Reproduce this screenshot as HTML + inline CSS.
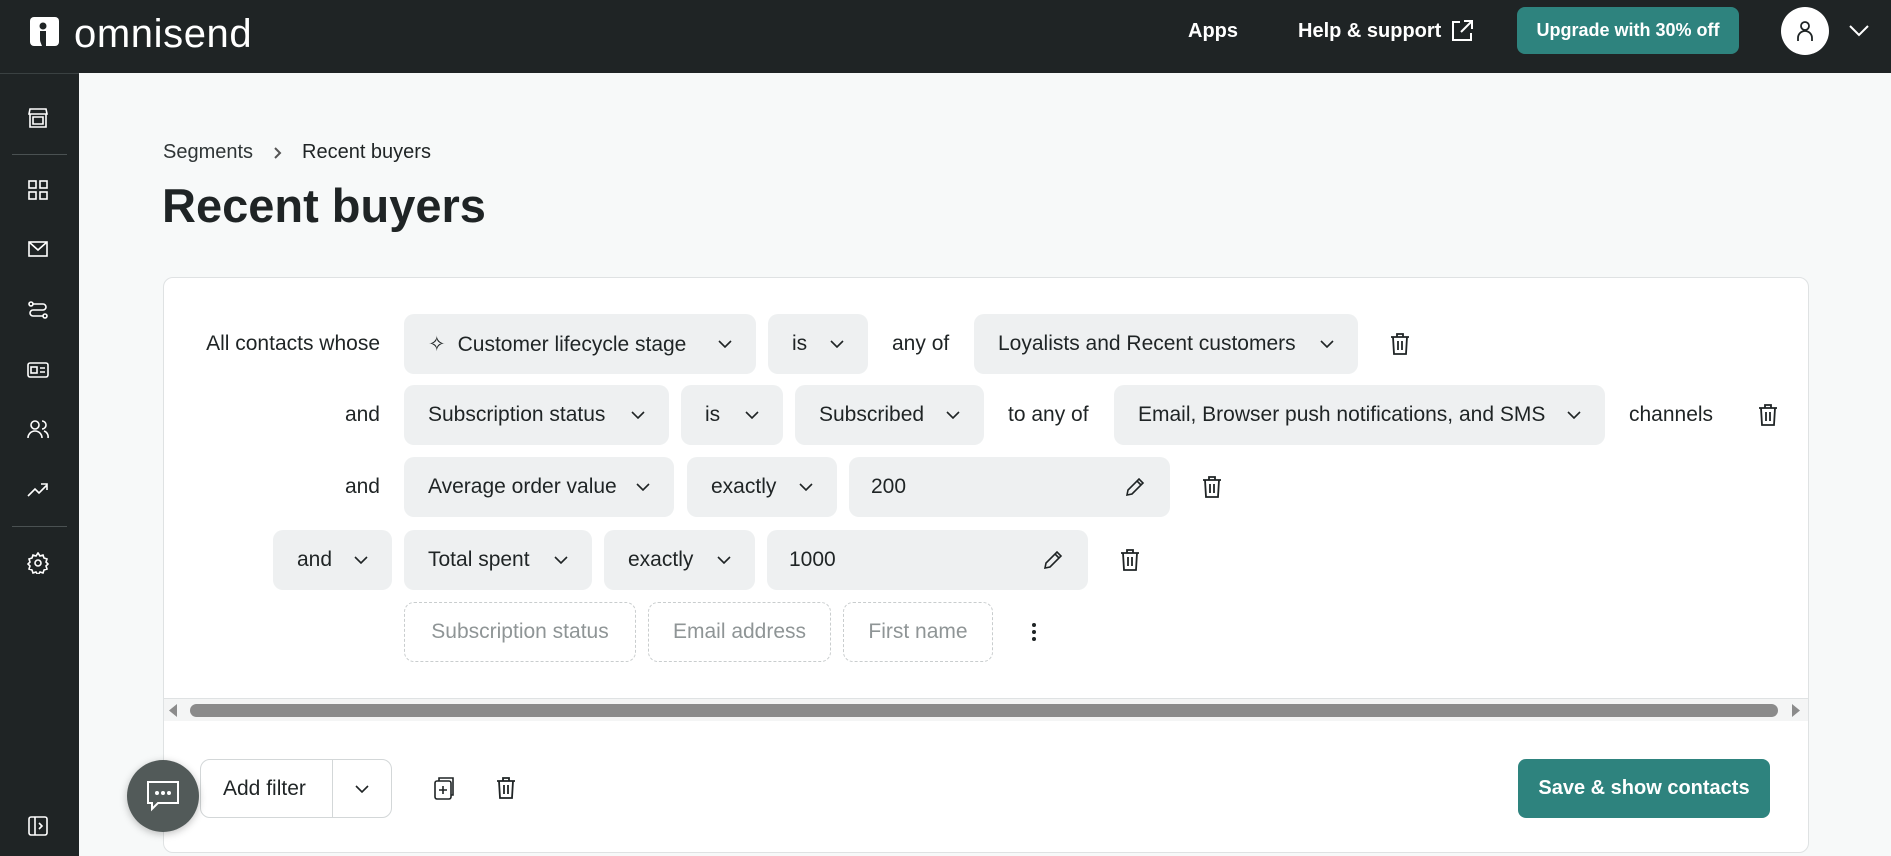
<!DOCTYPE html>
<html><head><meta charset="utf-8"><style>
*{box-sizing:border-box;margin:0;padding:0}
body{width:1891px;height:856px;overflow:hidden;background:#f7f9f9;font-family:"Liberation Sans",sans-serif;color:#1f2425;position:relative}
.top{position:absolute;left:0;top:0;width:1891px;height:73px;background:#1f2425}
.side{position:absolute;left:0;top:73px;width:79px;height:783px;background:#1f2425;border-top:1px solid #3a4142}
.a{position:absolute}
.p{position:absolute;height:60px;background:#eef0f1;border-radius:10px;display:flex;align-items:center;padding:0 24px;font-size:21px;font-weight:500;white-space:nowrap;justify-content:space-between}
.p svg{margin-left:14px;flex:none}
.t{position:absolute;font-size:21px;line-height:60px;white-space:nowrap}
.d{position:absolute;height:60px;border:1px dashed #c9cdce;border-radius:10px;font-size:21px;color:#8f9596;display:flex;align-items:center;justify-content:center;white-space:nowrap}
.si{position:absolute;left:27px;width:22px;height:22px}
</style></head><body>
<div class="top">
  <svg class="a" style="left:30px;top:17px" width="29" height="29" viewBox="0 0 29 29"><rect width="29" height="29" rx="4" fill="#fff"/><circle cx="13" cy="9" r="3.5" fill="#1f2425"/><path d="M10 14h6v15h-4c-1-3-2-4-2-7z" fill="#1f2425"/></svg>
  <div class="a" style="left:74px;top:12px;font-size:40px;color:#fff;letter-spacing:0.6px">omnisend</div>
  <div class="a" style="left:1188px;top:20px;font-size:20px;color:#fff;font-weight:bold">Apps</div>
  <div class="a" style="left:1298px;top:20px;font-size:20px;color:#fff;font-weight:bold">Help &amp; support</div>
  <svg class="a" style="left:1450px;top:19px" width="24" height="24" viewBox="0 0 24 24" fill="none" stroke="#fff" stroke-width="2"><path d="M10 3H3v18h18v-7M14 2h8v8M22 2L11 13"/></svg>
  <div class="a" style="left:1517px;top:7px;width:222px;height:47px;background:#2e837e;border-radius:8px;color:#fff;font-weight:bold;font-size:18px;display:flex;align-items:center;justify-content:center">Upgrade with 30% off</div>
  <div class="a" style="left:1781px;top:7px;width:48px;height:48px;border-radius:50%;background:#fff"></div>
  <svg class="a" style="left:1795px;top:19px" width="20" height="24" viewBox="0 0 20 24" fill="none" stroke="#1f2425" stroke-width="1.8"><circle cx="10" cy="7" r="4"/><path d="M3 22v-3a7 7 0 0 1 14 0v3"/></svg>
  <svg class="a" style="left:1849px;top:25px" width="20" height="12" viewBox="0 0 20 12" fill="none" stroke="#fff" stroke-width="2"><path d="M1 1l9 9 9-9"/></svg>
</div>
<div class="side">
  <svg class="si" style="top:33px" viewBox="0 0 22 22" fill="none" stroke="#fff" stroke-width="1.6"><path d="M3 2h16l1 5H2zM3 7v13h16V7M6 10h10v7H6z"/></svg>
  <div class="a" style="left:12px;top:80px;width:55px;height:1px;background:#4a5152"></div>
  <svg class="si" style="top:105px" viewBox="0 0 22 22" fill="none" stroke="#fff" stroke-width="1.6"><rect x="2" y="2" width="7" height="7"/><rect x="13" y="2" width="7" height="7"/><rect x="2" y="13" width="7" height="7"/><rect x="13" y="13" width="7" height="7"/></svg>
  <svg class="si" style="top:164px" viewBox="0 0 22 22" fill="none" stroke="#fff" stroke-width="1.6"><rect x="2" y="4" width="18" height="14"/><path d="M2 4l9 8 9-8"/></svg>
  <svg class="si" style="top:225px" viewBox="0 0 22 22" fill="none" stroke="#fff" stroke-width="1.6"><circle cx="4" cy="5" r="2"/><circle cx="18" cy="17" r="2"/><path d="M6 5h10a3 3 0 0 1 0 6H6a3 3 0 0 0 0 6h10"/></svg>
  <svg class="si" style="top:285px" viewBox="0 0 22 22" fill="none" stroke="#fff" stroke-width="1.6"><rect x="1" y="4" width="20" height="14" rx="2"/><rect x="4" y="8" width="6" height="6"/><path d="M13 9h5M13 13h5"/></svg>
  <svg class="si" style="top:344px" viewBox="0 0 22 22" fill="none" stroke="#fff" stroke-width="1.6"><circle cx="8" cy="7" r="4"/><path d="M1 20a7 7 0 0 1 14 0M15 3a4 4 0 0 1 0 8M17 13a6 6 0 0 1 4 7"/></svg>
  <svg class="si" style="top:404px" viewBox="0 0 22 22" fill="none" stroke="#fff" stroke-width="1.6"><path d="M1 18l7-7 4 4 8-8M14 6h6v6"/></svg>
  <div class="a" style="left:12px;top:452px;width:55px;height:1px;background:#4a5152"></div>
  <svg class="si" style="top:478px" viewBox="0 0 22 22" fill="none" stroke="#fff" stroke-width="1.6"><circle cx="11" cy="11" r="3"/><path d="M11 1l2 3 3-1 1 3 3 1-1 3 2 2-2 2 1 3-3 1-1 3-3-1-2 3-2-3-3 1-1-3-3-1 1-3-2-2 2-2-1-3 3-1 1-3 3 1z"/></svg>
  <svg class="si" style="top:741px" viewBox="0 0 22 22" fill="none" stroke="#fff" stroke-width="1.6"><rect x="2" y="2" width="18" height="18" rx="2"/><path d="M8 2v18M12 8l3 3-3 3"/></svg>
</div>

<div class="a" style="left:163px;top:141px;font-size:20px;color:#2f3536">Segments</div>
<svg class="a" style="left:274px;top:147px" width="8" height="12" viewBox="0 0 8 12" fill="none" stroke="#555" stroke-width="2"><path d="M1 1l5 5-5 5"/></svg>
<div class="a" style="left:302px;top:141px;font-size:20px;font-weight:500">Recent buyers</div>
<div class="a" style="left:162px;top:178px;font-size:47px;font-weight:bold">Recent buyers</div>

<div class="a" style="left:163px;top:277px;width:1646px;height:576px;background:#fff;border:1px solid #dfe2e3;border-radius:10px"></div>
<div class="a" style="left:164px;top:698px;width:1644px;height:1px;background:#dfe2e3"></div>
<div class="a" style="left:164px;top:699px;width:1644px;height:22px;background:#f4f5f5"></div>
<div class="a" style="left:190px;top:704px;width:1588px;height:13px;background:#8b8b8b;border-radius:7px"></div>
<svg class="a" style="left:168px;top:704px" width="10" height="13"><path d="M9 0v13L1 6.5z" fill="#8b8b8b"/></svg>
<svg class="a" style="left:1791px;top:704px" width="10" height="13"><path d="M1 0v13l8-6.5z" fill="#8b8b8b"/></svg>

<svg width="0" height="0" style="position:absolute"><defs>
<symbol id="ch" viewBox="0 0 14 8"><path d="M1 1l6 6 6-6" fill="none" stroke="#1f2425" stroke-width="1.6"/></symbol>
<symbol id="tr" viewBox="0 0 22 24"><path d="M2 5h18M8 5V2h6v3M4 5l1 17h12l1-17M9 9v9M13 9v9" fill="none" stroke="#1f2425" stroke-width="1.8"/></symbol>
<symbol id="pe" viewBox="0 0 22 22"><path d="M3 19l1-5L15 3l4 4L8 18zM13 5l4 4" fill="none" stroke="#1f2425" stroke-width="1.6"/></symbol>
</defs></svg>

<div class="t" style="right:1511px;top:314px">All contacts whose</div>
<div class="p" style="left:404px;top:314px;width:352px"><span><span style="margin-right:12px">✧</span>Customer lifecycle stage</span><svg width="14" height="8"><use href="#ch"/></svg></div>
<div class="p" style="left:768px;top:314px;width:100px"><span>is</span><svg width="14" height="8"><use href="#ch"/></svg></div>
<div class="t" style="left:892px;top:314px">any of</div>
<div class="p" style="left:974px;top:314px;width:384px"><span>Loyalists and Recent customers</span><svg width="14" height="8"><use href="#ch"/></svg></div>
<svg class="a" style="left:1389px;top:332px" width="22" height="24"><use href="#tr"/></svg>

<div class="t" style="right:1511px;top:385px">and</div>
<div class="p" style="left:404px;top:385px;width:265px"><span>Subscription status</span><svg width="14" height="8"><use href="#ch"/></svg></div>
<div class="p" style="left:681px;top:385px;width:102px"><span>is</span><svg width="14" height="8"><use href="#ch"/></svg></div>
<div class="p" style="left:795px;top:385px;width:189px"><span>Subscribed</span><svg width="14" height="8"><use href="#ch"/></svg></div>
<div class="t" style="left:1008px;top:385px">to any of</div>
<div class="p" style="left:1114px;top:385px;width:491px"><span>Email, Browser push notifications, and SMS</span><svg width="14" height="8"><use href="#ch"/></svg></div>
<div class="t" style="left:1629px;top:385px">channels</div>
<svg class="a" style="left:1757px;top:403px" width="22" height="24"><use href="#tr"/></svg>

<div class="t" style="right:1511px;top:457px">and</div>
<div class="p" style="left:404px;top:457px;width:270px"><span>Average order value</span><svg width="14" height="8"><use href="#ch"/></svg></div>
<div class="p" style="left:687px;top:457px;width:150px"><span>exactly</span><svg width="14" height="8"><use href="#ch"/></svg></div>
<div class="p" style="left:849px;top:457px;width:321px;padding-left:22px"><span>200</span><svg width="22" height="22"><use href="#pe"/></svg></div>
<svg class="a" style="left:1201px;top:475px" width="22" height="24"><use href="#tr"/></svg>

<div class="p" style="left:273px;top:530px;width:119px"><span>and</span><svg width="14" height="8"><use href="#ch"/></svg></div>
<div class="p" style="left:404px;top:530px;width:188px"><span>Total spent</span><svg width="14" height="8"><use href="#ch"/></svg></div>
<div class="p" style="left:604px;top:530px;width:151px"><span>exactly</span><svg width="14" height="8"><use href="#ch"/></svg></div>
<div class="p" style="left:767px;top:530px;width:321px;padding-left:22px"><span>1000</span><svg width="22" height="22"><use href="#pe"/></svg></div>
<svg class="a" style="left:1119px;top:548px" width="22" height="24"><use href="#tr"/></svg>

<div class="d" style="left:404px;top:602px;width:232px">Subscription status</div>
<div class="d" style="left:648px;top:602px;width:183px">Email address</div>
<div class="d" style="left:843px;top:602px;width:150px">First name</div>
<svg class="a" style="left:1031px;top:622px" width="6" height="20"><circle cx="3" cy="3" r="2" fill="#1f2425"/><circle cx="3" cy="10" r="2" fill="#1f2425"/><circle cx="3" cy="17" r="2" fill="#1f2425"/></svg>

<div class="a" style="left:200px;top:759px;width:192px;height:59px;border:1px solid #d3d7d8;border-radius:10px;background:#fff"></div>
<div class="a" style="left:332px;top:759px;width:1px;height:59px;background:#d3d7d8"></div>
<div class="a" style="left:223px;top:777px;font-size:21px;font-weight:500">Add filter</div>
<svg class="a" style="left:355px;top:785px" width="14" height="8"><use href="#ch"/></svg>
<svg class="a" style="left:433px;top:775px" width="24" height="26" viewBox="0 0 24 26" fill="none" stroke="#1f2425" stroke-width="1.6"><rect x="2" y="6" width="16" height="18" rx="2"/><path d="M6 6V3h14v17h-2M10 11v8M6 15h8"/></svg>
<svg class="a" style="left:495px;top:776px" width="22" height="24"><use href="#tr"/></svg>
<div class="a" style="left:1518px;top:759px;width:252px;height:59px;background:#2e837e;border-radius:8px;color:#fff;font-size:20px;font-weight:bold;display:flex;align-items:center;justify-content:center">Save &amp; show contacts</div>
<div class="a" style="left:127px;top:760px;width:72px;height:72px;border-radius:50%;background:#525a59;box-shadow:0 2px 8px rgba(0,0,0,.25)"></div>
<svg class="a" style="left:146px;top:780px" width="34" height="32" viewBox="0 0 34 32" fill="none" stroke="#fff" stroke-width="2"><path d="M2 2h30v21H12l-6 6v-6H2z"/><circle cx="11" cy="13" r="1" fill="#fff"/><circle cx="17" cy="13" r="1" fill="#fff"/><circle cx="23" cy="13" r="1" fill="#fff"/></svg>
</body></html>
